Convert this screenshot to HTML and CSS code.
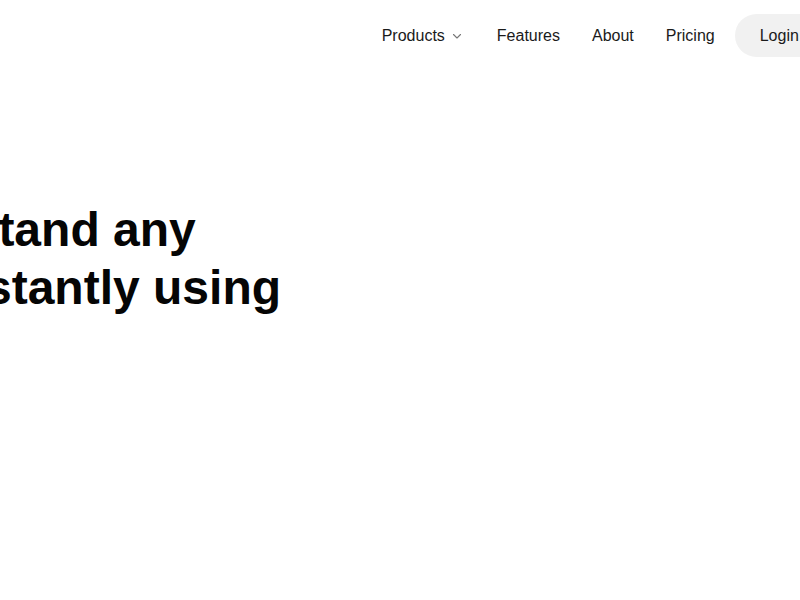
FILE: index.html
```html
<!DOCTYPE html>
<html lang="en">
<head>
<meta charset="utf-8">
<title>Understand any PDF</title>
<link rel="stylesheet" href="styles.css">
</head>
<body>
<div class="page">
  <div class="container">
    <header class="nav">
      <a class="logo" href="#">DocMind</a>
      <ul class="links">
        <li class="link has-menu">Products
          <svg class="chev" width="16" height="16" viewBox="0 0 16 16" aria-hidden="true"><path d="M4.5 6.5 L8 10 L11.5 6.5" fill="none" stroke="#777" stroke-width="1.1" stroke-linecap="round" stroke-linejoin="round"/></svg>
        </li>
        <li class="link">Features</li>
        <li class="link">About</li>
        <li class="link">Pricing</li>
      </ul>
      <div class="actions">
        <a class="btn btn-light" href="#">Login</a>
        <a class="btn btn-dark" href="#">Get started</a>
      </div>
    </header>
    <main class="hero">
      <h1 class="title">Understand any<br>PDF instantly using</h1>
    </main>
  </div>
</div>
</body>
</html>
```
FILE: styles.css
```css
* { box-sizing: border-box; }
html, body {
  margin: 0;
  padding: 0;
  background: #ffffff;
  overflow: hidden;
}
body {
  font-family: "Liberation Sans", Arial, sans-serif;
  color: #111;
}
.page {
  display: flex;
  justify-content: center;
  width: 100%;
  min-height: 600px;
}
.container {
  flex: 0 0 1334px;
  width: 1334px;
  padding: 0 100px;
}
.nav {
  display: flex;
  align-items: center;
  height: 71px;
}
.logo {
  font-weight: 700;
  font-size: 20px;
  color: #000;
  text-decoration: none;
}
.links {
  display: flex;
  align-items: center;
  gap: 32px;
  list-style: none;
  margin: 0 0 0 auto;
  padding: 0;
}
.link {
  display: flex;
  align-items: center;
  gap: 4px;
  font-size: 16px;
  color: #1a1a1a;
  line-height: 20px;
}
.chev { display: block; }
.actions {
  display: flex;
  align-items: center;
  gap: 8px;
  margin-left: 20px;
  margin-right: 6px;
}
.btn {
  display: flex;
  align-items: center;
  height: 43px;
  padding: 0 25px;
  border-radius: 22px;
  font-size: 16px;
  text-decoration: none;
}
.btn-light {
  background: #f1f1f1;
  color: #1a1a1a;
}
.btn-dark {
  background: #111;
  color: #fff;
}
.hero {
  padding-top: 130px;
}
.title {
  margin: 0;
  font-size: 48px;
  line-height: 1.2;
  font-weight: 700;
  color: #050505;
}
```
